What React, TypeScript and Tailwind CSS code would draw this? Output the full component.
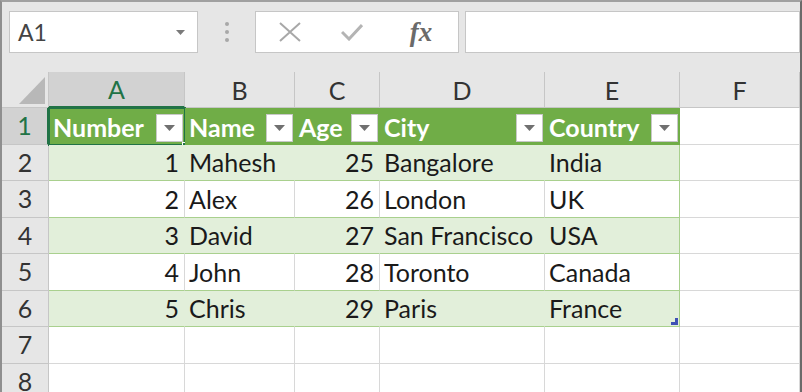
import React from 'react';

const cols = [
  { key: 'A', w: 136 },
  { key: 'B', w: 110 },
  { key: 'C', w: 85 },
  { key: 'D', w: 165 },
  { key: 'E', w: 135 },
  { key: 'F', w: 120 },
];

const rowHeights = [37, 36, 37, 36, 37, 36, 37, 36];

const headers = ['Number', 'Name', 'Age', 'City', 'Country'];

const data = [
  [1, 'Mahesh', 25, 'Bangalore', 'India'],
  [2, 'Alex', 26, 'London', 'UK'],
  [3, 'David', 27, 'San Francisco', 'USA'],
  [4, 'John', 28, 'Toronto', 'Canada'],
  [5, 'Chris', 29, 'Paris', 'France'],
];

const font = { fontFamily: 'Lato, "Open Sans", sans-serif' };

const FilterButton = () => (
  <div className="w-[27px] h-[28px] shrink-0 bg-white border border-[#c8c8c8] flex items-center justify-center">
    <svg width="11" height="6" viewBox="0 0 11 6">
      <path d="M0 0 L11 0 L5.5 6 Z" fill="#707070" />
    </svg>
  </div>
);

const Toolbar = () => (
  <div className="h-[70px] flex items-start pt-[9px] pl-[7px]">
    <div className="w-[189px] h-[42px] bg-white border border-[#c6c6c6] flex items-center justify-between pl-[8px] pr-[12px]">
      <span className="text-[23px] text-[#444]" style={font}>A1</span>
      <svg width="9" height="5" viewBox="0 0 9 5">
        <path d="M0 0 L9 0 L4.5 5 Z" fill="#7a7a7a" />
      </svg>
    </div>
    <div className="w-[57px] h-[42px] flex flex-col items-center justify-center gap-[4px]">
      <div className="w-[4px] h-[4px] rounded-full bg-[#a8a8a8]" />
      <div className="w-[4px] h-[4px] rounded-full bg-[#a8a8a8]" />
      <div className="w-[4px] h-[4px] rounded-full bg-[#a8a8a8]" />
    </div>
    <div className="w-[204px] h-[42px] bg-white border border-[#c6c6c6] flex items-center">
      <div className="w-[66px] flex justify-center pl-[2px]">
        <svg width="22" height="20" viewBox="0 0 22 20">
          <path d="M1 1 L21 19 M21 1 L1 19" stroke="#a8a8a8" strokeWidth="2" fill="none" />
        </svg>
      </div>
      <div className="w-[60px] flex justify-center">
        <svg width="22" height="18" viewBox="0 0 22 18">
          <path d="M1 9 L8 16 L21 2" stroke="#b4b4b4" strokeWidth="3" fill="none" />
        </svg>
      </div>
      <div className="flex-1 flex justify-center pl-[2px]">
        <span
          className="text-[27px] italic font-bold text-[#6a6a6a] leading-none"
          style={{ fontFamily: '"Liberation Serif", serif' }}
        >
          fx
        </span>
      </div>
    </div>
    <div className="ml-[6px] flex-1 h-[42px] bg-white border border-[#c6c6c6]" />
  </div>
);

export default function App() {
  return (
    <div
      className="w-[802px] h-[392px] overflow-hidden bg-[#e6e6e6] border-t-2 border-l-2 border-r-2 border-t-[#a0a0a0] border-l-[#8f8f8f] border-r-[#6a6a6a]"
      style={font}
    >
      <Toolbar />
      <div className="flex flex-col">
        {/* column headers */}
        <div className="flex h-[36px]">
          <div className="w-[47px] h-full border-r border-b border-[#c6c6c6] flex items-end justify-end pr-[3px] pb-[3px]">
            <svg width="26" height="27" viewBox="0 0 26 27">
              <path d="M26 0 L26 27 L0 27 Z" fill="#b8b8b8" />
            </svg>
          </div>
          {cols.map((c, i) => (
            <div
              key={c.key}
              style={{ width: c.w }}
              className={
                i === 0
                  ? 'h-full bg-[#d2d2d2] border-r border-[#c6c6c6] border-b-2 border-b-[#217346] flex items-center justify-center pt-[2px] text-[25px] text-[#217346]'
                  : 'h-full border-r border-b border-[#c6c6c6] flex items-center justify-center pt-[2px] text-[25px] text-[#333]'
              }
            >
              {c.key}
            </div>
          ))}
        </div>
        {rowHeights.map((h, r) => {
          const isHeader = r === 0;
          const dataRow = r >= 1 && r <= 5 ? data[r - 1] : null;
          const banded = r === 1 || r === 3 || r === 5;
          return (
            <div key={r} className="flex" style={{ height: h }}>
              <div
                className={
                  isHeader
                    ? 'w-[47px] h-full bg-[#d2d2d2] border-r-2 border-r-[#217346] border-b border-[#c6c6c6] flex items-center justify-center text-[25px] text-[#217346]'
                    : 'w-[47px] h-full border-r border-b border-[#c6c6c6] flex items-center justify-center text-[25px] text-[#333]'
                }
              >
                {r + 1}
              </div>
              {cols.map((c, ci) => {
                const inTable = ci < 5 && r <= 5;
                if (isHeader && inTable) {
                  return (
                    <div
                      key={c.key}
                      style={{ width: c.w }}
                      className="relative h-full bg-[#70ad47] flex items-center justify-between pl-[4px] pr-[2px] pt-[2px]"
                    >
                      <span className="text-[25px] font-bold text-white leading-none whitespace-nowrap">{headers[ci]}</span>
                      <FilterButton />
                      {ci === 0 && (
                        <>
                          <div className="absolute -left-[1px] -top-[1px] -right-[1px] -bottom-[1px] border-2 border-[#217346]" />
                          <div className="absolute -right-[4px] -bottom-[4px] w-[7px] h-[7px] bg-[#217346] border border-white" />
                        </>
                      )}
                    </div>
                  );
                }
                if (inTable && dataRow) {
                  const v = dataRow[ci];
                  const isNum = typeof v === 'number';
                  const last = ci === 4;
                  return (
                    <div
                      key={c.key}
                      style={{ width: c.w }}
                      className={
                        (banded ? 'bg-[#e2efda] ' : 'bg-white ') +
                        (last
                          ? 'border-r border-r-[#a9d08e] '
                          : banded
                            ? 'border-r border-r-[#e2efda] '
                            : 'border-r border-r-[#d8d8d8] ') +
                        'relative h-full border-b border-b-[#a9d08e] flex items-center pt-[1px] text-[25px] text-[#1a1a1a] whitespace-nowrap ' +
                        (isNum ? 'justify-end pr-[5px]' : 'justify-start pl-[4px]')
                      }
                    >
                      {v}
                      {last && r === 5 && (
                        <svg className="absolute right-[1px] bottom-[1px]" width="7" height="7" viewBox="0 0 7 7">
                          <path d="M4 0 L7 0 L7 7 L0 7 L0 4 L4 4 Z" fill="#3f51b5" />
                        </svg>
                      )}
                    </div>
                  );
                }
                return (
                  <div
                    key={c.key}
                    style={{ width: c.w }}
                    className="h-full bg-white border-r border-b border-[#d8d8d8]"
                  />
                );
              })}
            </div>
          );
        })}
      </div>
    </div>
  );
}
